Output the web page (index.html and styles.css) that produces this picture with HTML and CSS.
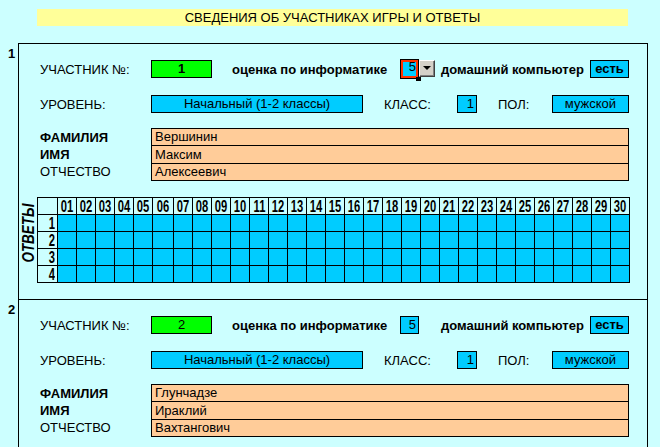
FILE: index.html
```html
<!DOCTYPE html>
<html lang="ru">
<head>
<meta charset="utf-8">
<title>Сведения об участниках</title>
<link rel="stylesheet" href="styles.css">
</head>
<body>
<div class="title">СВЕДЕНИЯ ОБ УЧАСТНИКАХ ИГРЫ И ОТВЕТЫ</div>
<div class="sheet">
  <div class="entry">
    <div class="num">1</div>
    <div class="panel">
      <div class="row">
        <span class="lbl lbl-main">УЧАСТНИК №:</span>
        <span class="box green bold f-id">1</span>
        <span class="lbl bold lbl-grade">оценка по информатике</span>
        <span class="box cyan right f-grade selected">5</span>
        <span class="ddbtn"><span class="tri"></span></span>
        <span class="lbl bold lbl-pc">домашний компьютер</span>
        <span class="box cyan bold f-pc">есть</span>
      </div>
      <div class="row row2">
        <span class="lbl lbl-main">УРОВЕНЬ:</span>
        <span class="box cyan f-level">Начальный (1-2 классы)</span>
        <span class="lbl lbl-class">КЛАСС:</span>
        <span class="box cyan right f-class">1</span>
        <span class="lbl lbl-sex">ПОЛ:</span>
        <span class="box cyan f-sex">мужской</span>
      </div>
      <div class="names">
        <div class="nlabels">
          <span class="bold">ФАМИЛИЯ</span>
          <span class="bold">ИМЯ</span>
          <span>ОТЧЕСТВО</span>
        </div>
        <div class="nbox">
          <span>Вершинин</span>
          <span>Максим</span>
          <span>Алексеевич</span>
        </div>
      </div>
      <div class="answers">
        <div class="vlabel"><span>ОТВЕТЫ</span></div>
        <div class="grid">
          <span class="hd"></span>
          <span class="hd"><b>01</b></span><span class="hd"><b>02</b></span><span class="hd"><b>03</b></span><span class="hd"><b>04</b></span><span class="hd"><b>05</b></span><span class="hd"><b>06</b></span><span class="hd"><b>07</b></span><span class="hd"><b>08</b></span><span class="hd"><b>09</b></span><span class="hd"><b>10</b></span>
          <span class="hd"><b>11</b></span><span class="hd"><b>12</b></span><span class="hd"><b>13</b></span><span class="hd"><b>14</b></span><span class="hd"><b>15</b></span><span class="hd"><b>16</b></span><span class="hd"><b>17</b></span><span class="hd"><b>18</b></span><span class="hd"><b>19</b></span><span class="hd"><b>20</b></span>
          <span class="hd"><b>21</b></span><span class="hd"><b>22</b></span><span class="hd"><b>23</b></span><span class="hd"><b>24</b></span><span class="hd"><b>25</b></span><span class="hd"><b>26</b></span><span class="hd"><b>27</b></span><span class="hd"><b>28</b></span><span class="hd"><b>29</b></span><span class="hd"><b>30</b></span>

          <span class="rl"><b>1</b></span>
          <span class="a"></span><span class="a"></span><span class="a"></span><span class="a"></span><span class="a"></span><span class="a"></span><span class="a"></span><span class="a"></span><span class="a"></span><span class="a"></span>
          <span class="a"></span><span class="a"></span><span class="a"></span><span class="a"></span><span class="a"></span><span class="a"></span><span class="a"></span><span class="a"></span><span class="a"></span><span class="a"></span>
          <span class="a"></span><span class="a"></span><span class="a"></span><span class="a"></span><span class="a"></span><span class="a"></span><span class="a"></span><span class="a"></span><span class="a"></span><span class="a"></span>

          <span class="rl"><b>2</b></span>
          <span class="a"></span><span class="a"></span><span class="a"></span><span class="a"></span><span class="a"></span><span class="a"></span><span class="a"></span><span class="a"></span><span class="a"></span><span class="a"></span>
          <span class="a"></span><span class="a"></span><span class="a"></span><span class="a"></span><span class="a"></span><span class="a"></span><span class="a"></span><span class="a"></span><span class="a"></span><span class="a"></span>
          <span class="a"></span><span class="a"></span><span class="a"></span><span class="a"></span><span class="a"></span><span class="a"></span><span class="a"></span><span class="a"></span><span class="a"></span><span class="a"></span>

          <span class="rl"><b>3</b></span>
          <span class="a"></span><span class="a"></span><span class="a"></span><span class="a"></span><span class="a"></span><span class="a"></span><span class="a"></span><span class="a"></span><span class="a"></span><span class="a"></span>
          <span class="a"></span><span class="a"></span><span class="a"></span><span class="a"></span><span class="a"></span><span class="a"></span><span class="a"></span><span class="a"></span><span class="a"></span><span class="a"></span>
          <span class="a"></span><span class="a"></span><span class="a"></span><span class="a"></span><span class="a"></span><span class="a"></span><span class="a"></span><span class="a"></span><span class="a"></span><span class="a"></span>

          <span class="rl"><b>4</b></span>
          <span class="a"></span><span class="a"></span><span class="a"></span><span class="a"></span><span class="a"></span><span class="a"></span><span class="a"></span><span class="a"></span><span class="a"></span><span class="a"></span>
          <span class="a"></span><span class="a"></span><span class="a"></span><span class="a"></span><span class="a"></span><span class="a"></span><span class="a"></span><span class="a"></span><span class="a"></span><span class="a"></span>
          <span class="a"></span><span class="a"></span><span class="a"></span><span class="a"></span><span class="a"></span><span class="a"></span><span class="a"></span><span class="a"></span><span class="a"></span><span class="a"></span>
        </div>
      </div>
    </div>
  </div>

  <div class="entry">
    <div class="num">2</div>
    <div class="panel">
      <div class="row">
        <span class="lbl lbl-main">УЧАСТНИК №:</span>
        <span class="box green f-id">2</span>
        <span class="lbl bold lbl-grade">оценка по информатике</span>
        <span class="box cyan right f-grade">5</span>
        <span class="ddspace"></span>
        <span class="lbl bold lbl-pc">домашний компьютер</span>
        <span class="box cyan bold f-pc">есть</span>
      </div>
      <div class="row row2">
        <span class="lbl lbl-main">УРОВЕНЬ:</span>
        <span class="box cyan f-level">Начальный (1-2 классы)</span>
        <span class="lbl lbl-class">КЛАСС:</span>
        <span class="box cyan right f-class">1</span>
        <span class="lbl lbl-sex">ПОЛ:</span>
        <span class="box cyan f-sex">мужской</span>
      </div>
      <div class="names">
        <div class="nlabels">
          <span class="bold">ФАМИЛИЯ</span>
          <span class="bold">ИМЯ</span>
          <span>ОТЧЕСТВО</span>
        </div>
        <div class="nbox">
          <span>Глунчадзе</span>
          <span>Ираклий</span>
          <span>Вахтангович</span>
        </div>
      </div>
    </div>
  </div>
</div>
</body>
</html>
```

FILE: styles.css
```css
* { box-sizing: border-box; }

html, body {
  margin: 0;
  padding: 0;
  background: #ccffff;
  overflow: hidden;
}

body {
  font-family: "Liberation Sans", Arial, sans-serif;
  font-size: 13px;
  line-height: 15px;
  color: #000;
  width: 660px;
  height: 447px;
}

.bold { font-weight: bold; }

.title {
  margin: 9px 0 0 37px;
  width: 591px;
  height: 17px;
  line-height: 17px;
  background: #ffff99;
  text-align: center;
}

.sheet {
  margin-top: 17px;
  display: flex;
  flex-direction: column;
}

.entry {
  display: flex;
}

.num {
  width: 18px;
  padding: 3px 0 0 8px;
  font-weight: bold;
}

.panel {
  width: 630px;
  border: 1px solid #000;
  border-bottom: none;
  padding: 16px 0 16px 0;
  display: flex;
  flex-direction: column;
}

.entry + .entry .panel {
  height: 200px;
}

.row {
  display: flex;
  align-items: center;
  height: 18px;
  padding-left: 21px;
}

.row2 { margin-top: 17px; }

.lbl { white-space: nowrap; }
.lbl-main { width: 111px; }
.lbl-grade { width: 168px; margin-left: 20px; }
.lbl-pc { width: 149px; margin-left: 6px; }
.lbl-class { width: 73px; margin-left: 21px; }
.lbl-sex { width: 54px; margin-left: 21px; }

.box {
  height: 18px;
  line-height: 16px;
  border: 1px solid #000;
  text-align: center;
  white-space: nowrap;
  overflow: hidden;
}
.box.right { text-align: right; padding-right: 2px; }

.green { background: #00ff00; }
.cyan { background: #00ccff; }

.f-id { width: 61px; }
.f-grade { width: 19px; }
.f-pc { width: 39px; }
.f-level { width: 212px; }
.f-class { width: 20px; }
.f-sex { width: 77px; }

.selected {
  position: relative;
  height: 20px;
  line-height: 14px;
  border: 1px solid #000;
  box-shadow: inset 0 0 0 2px #ff3300;
  overflow: visible;
}
.selected::after {
  content: "";
  position: absolute;
  right: -3px;
  bottom: -3px;
  width: 5px;
  height: 4px;
  background: #000;
}

.ddbtn {
  width: 16px;
  height: 17px;
  margin-top: -2px;
  background: #d4d0c8;
  border-top: 1px solid #ffffff;
  border-left: 1px solid #ffffff;
  border-right: 1px solid #404040;
  border-bottom: 1px solid #404040;
  box-shadow: inset -1px -1px 0 #808080;
  display: flex;
  align-items: center;
  justify-content: center;
}
.tri {
  width: 0;
  height: 0;
  border-left: 4px solid transparent;
  border-right: 4px solid transparent;
  border-top: 4px solid #000;
}
.ddspace { width: 16px; }

.names {
  display: flex;
  margin-top: 15px;
  padding-left: 21px;
}
.nlabels {
  width: 111px;
  display: flex;
  flex-direction: column;
  padding-top: 1px;
}
.nlabels span { height: 17px; line-height: 17px; }

.nbox {
  width: 478px;
  background: #ffcc99;
  border: 1px solid #000;
  display: flex;
  flex-direction: column;
}
.nbox span {
  height: 17px;
  line-height: 16px;
  padding-left: 3px;
  border-top: 1px solid #000;
}
.nbox span:first-child { border-top: none; height: 16px; }
.nbox span:nth-child(2) { height: 18px; line-height: 17px; }

.answers {
  display: flex;
  margin-top: 16px;
}
.vlabel {
  width: 18px;
  padding-top: 3px;
  display: flex;
  justify-content: center;
}
.vlabel span {
  writing-mode: vertical-rl;
  transform: rotate(180deg) scaleY(0.84);
  font-size: 16px;
  font-weight: bold;
  font-style: italic;
  line-height: 13px;
  height: 68px;
  text-align: center;
  white-space: nowrap;
}

.grid {
  display: grid;
  grid-template-columns: 19px repeat(5, 18px) 20px repeat(24, 18px);
  grid-auto-rows: 16px;
  gap: 1px;
  padding: 1px;
  background: #000;
  width: max-content;
}
.grid span {
  display: flex;
  align-items: center;
  overflow: visible;
}
.grid b {
  display: inline-block;
  font-size: 16px;
  line-height: 16px;
  font-weight: bold;
  transform: scaleX(0.7);
  white-space: nowrap;
  position: relative;
  top: 1px;
}
.hd {
  background: #ccffff;
  justify-content: center;
}
.rl {
  background: #ccffff;
  justify-content: flex-end;
}
.rl b { transform-origin: right center; margin-right: 2px; }
.a { background: #00ccff; }
```
